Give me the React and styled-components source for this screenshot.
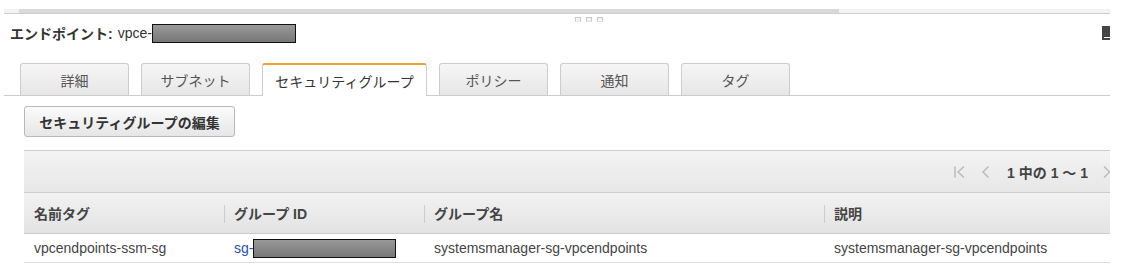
import styled, { createGlobalStyle } from "styled-components";

const GlobalStyle = createGlobalStyle`
  body {
    margin: 0;
    background: #fff;
    font-family: "Liberation Sans", Arial, "Noto Sans CJK JP", sans-serif;
    color: #444;
  }
`;

const Frame = styled.div`
  margin-left: 4px;
  width: 1106px;
  padding-top: 9px;
  overflow: hidden;
`;

const ScrollTrack = styled.div`
  height: 4px;
  background: #f2f2f2;
  border-bottom: 1px solid #cfcfcf;
  display: flex;
`;

const ScrollThumb = styled.div`
  margin-left: 15px;
  width: 820px;
  background: #d9d9d9;
`;

const Grip = styled.div`
  display: flex;
  justify-content: center;
  gap: 5px;
  height: 5px;
  padding-top: 3px;
  padding-left: 64px;
`;

const GripDot = styled.span`
  width: 4px;
  height: 3px;
  border: 1px solid #c8c8c8;
  border-bottom-color: #e6e6e6;
  background: #f4f4f4;
`;

const TitleRow = styled.div`
  display: flex;
  align-items: center;
  justify-content: space-between;
  height: 22px;
  padding-left: 6px;
`;

const Title = styled.div`
  display: flex;
  align-items: center;
  font-size: 14px;
  color: #333;
`;

const Label = styled.span`
  font-weight: bold;
  margin-right: 5px;
`;

const Redacted = styled.span`
  display: inline-block;
  width: ${({ w }) => w}px;
  height: ${({ h }) => h}px;
  box-sizing: border-box;
  border: 1px solid #111;
  background: linear-gradient(#999, #777);
`;

const PanelIcon = styled.span`
  width: 8px;
  height: 14px;
  background: #444;
  box-sizing: border-box;
  position: relative;
  &::after {
    content: "";
    position: absolute;
    left: 2px;
    right: 0;
    bottom: 2px;
    height: 1px;
    background: #fff;
  }
`;

const Tabs = styled.div`
  display: flex;
  gap: 12px;
  margin-top: 19px;
  padding-left: 16px;
  border-bottom: 1px solid #cccccc;
`;

const Tab = styled.div`
  box-sizing: border-box;
  width: ${({ w }) => w}px;
  display: flex;
  align-items: center;
  justify-content: center;
  font-size: 14px;
  border: 1px solid #cccccc;
  border-bottom: none;
  border-radius: 3px 3px 0 0;
  margin-bottom: ${({ active }) => (active ? "-1px" : "0")};
  height: ${({ active }) => (active ? "33px" : "32px")};
  color: ${({ active }) => (active ? "#333" : "#555")};
  background: ${({ active }) =>
    active ? "#fff" : "linear-gradient(#f6f6f6, #e6e6e6)"};
  border-top: ${({ active }) =>
    active ? "2px solid #f0a030" : "1px solid #cccccc"};
`;

const Toolbar = styled.div`
  padding: 10px 0 0 20px;
`;

const Button = styled.button`
  box-sizing: border-box;
  width: 211px;
  height: 31px;
  border: 1px solid #b8b8b8;
  border-radius: 3px;
  background: linear-gradient(#fbfbfb, #e6e6e6);
  font-family: inherit;
  font-size: 14px;
  font-weight: bold;
  color: #333;
  padding: 0;
`;

const Table = styled.div`
  margin: 13px 0 0 20px;
  width: 1100px;
`;

const Pager = styled.div`
  height: 41px;
  border-top: 1px solid #cccccc;
  border-bottom: 1px solid #cccccc;
  background: linear-gradient(#f3f3f3, #e7e7e7);
  display: flex;
  align-items: center;
  justify-content: flex-end;
  padding-right: 13px;
  gap: 12px;
`;

const PagerText = styled.span`
  font-size: 14px;
  font-weight: bold;
  color: #444;
  margin: 0 3px 0 2px;
`;

const Grid = styled.div`
  display: grid;
  grid-template-columns: 200px 200px 400px 300px;
`;

const HeadCell = styled.div`
  height: 41px;
  box-sizing: border-box;
  display: flex;
  align-items: center;
  padding-left: 10px;
  font-size: 14px;
  font-weight: bold;
  color: #444;
  background: linear-gradient(#f2f2f2, #e3e3e3);
  border-bottom: 1px solid #cccccc;
  position: relative;
  &::before {
    content: "";
    display: ${({ first }) => (first ? "none" : "block")};
    position: absolute;
    left: 0;
    top: 12px;
    height: 18px;
    border-left: 1px solid #cccccc;
  }
`;

const Cell = styled.div`
  height: 29px;
  box-sizing: border-box;
  display: flex;
  align-items: center;
  padding-left: 10px;
  font-size: 14px;
  color: #444;
  border-bottom: 1px solid #dddddd;
`;

const Link = styled.span`
  color: #2451b5;
`;

const Chevron = ({ first, color = "#bbb" }) => (
  <svg width="14" height="14" viewBox="0 0 14 14" fill="none" stroke={color} strokeWidth="1.5">
    {first && <path d="M2 1.5v11" />}
    <path d={first ? "M11 1.5L5 7l6 5.5" : "M9.5 1.5L4 7l5.5 5.5"} />
  </svg>
);

const Next = () => (
  <svg width="8" height="14" viewBox="0 0 8 14" fill="none" stroke="#bbb" strokeWidth="1.5">
    <path d="M1 1.5L6.5 7 1 12.5" />
  </svg>
);

const tabs = [
  { name: "詳細", w: 109 },
  { name: "サブネット", w: 109 },
  { name: "セキュリティグループ", w: 165, active: true },
  { name: "ポリシー", w: 109 },
  { name: "通知", w: 109 },
  { name: "タグ", w: 109 },
];

const columns = ["名前タグ", "グループ ID", "グループ名", "説明"];

const App = () => {
  return (
    <>
      <GlobalStyle />
      <Frame>
        <ScrollTrack>
          <ScrollThumb />
        </ScrollTrack>
        <Grip>
          <GripDot />
          <GripDot />
          <GripDot />
        </Grip>
        <TitleRow>
          <Title>
            <Label>エンドポイント:</Label>vpce-
            <Redacted w={144} h={19} />
          </Title>
          <PanelIcon />
        </TitleRow>
        <Tabs>
          {tabs.map((t) => (
            <Tab key={t.name} w={t.w} active={t.active}>
              {t.name}
            </Tab>
          ))}
        </Tabs>
        <Toolbar>
          <Button>セキュリティグループの編集</Button>
        </Toolbar>
        <Table>
          <Pager>
            <Chevron first />
            <Chevron />
            <PagerText>1 中の 1 ～ 1</PagerText>
            <Next />
          </Pager>
          <Grid>
            {columns.map((c, i) => (
              <HeadCell key={c} first={i === 0}>
                {c}
              </HeadCell>
            ))}
            <Cell>vpcendpoints-ssm-sg</Cell>
            <Cell>
              <Link>sg-</Link>
              <Redacted w={143} h={19} />
            </Cell>
            <Cell>systemsmanager-sg-vpcendpoints</Cell>
            <Cell>systemsmanager-sg-vpcendpoints</Cell>
          </Grid>
        </Table>
      </Frame>
    </>
  );
};

export default App;
